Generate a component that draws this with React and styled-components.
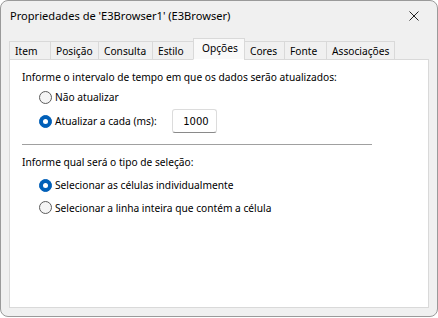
import React from "react";
import styled, { createGlobalStyle } from "styled-components";

const Global = createGlobalStyle`
  html, body {
    margin: 0;
    padding: 0;
    background: #ffffff;
  }
  body {
    font-family: "Noto Sans", "Open Sans", sans-serif;
    font-size: 10.2px;
    color: #000;
  }
`;

const Window = styled.div`
  box-sizing: border-box;
  width: 438px;
  height: 317px;
  border: 1px solid #9a9a9a;
  border-radius: 8px;
  background: #f0f0f0;
  display: flex;
  flex-direction: column;
  overflow: hidden;
`;

const TitleBar = styled.div`
  height: 29px;
  display: flex;
  align-items: center;
  justify-content: space-between;
  padding: 0 0 0 9px;
  font-size: 11.1px;
`;

const CloseButton = styled.div`
  width: 46px;
  height: 29px;
  display: flex;
  align-items: center;
  justify-content: center;
`;

const Body = styled.div`
  flex: 1;
  display: flex;
  flex-direction: column;
  padding: 8px;
`;

const TabStrip = styled.div`
  display: flex;
  align-items: flex-end;
  height: 21px;
  position: relative;
  z-index: 1;
`;

const Tab = styled.div`
  box-sizing: border-box;
  width: ${(p) => p.$w}px;
  height: ${(p) => (p.$active ? 22 : 19)}px;
  padding-left: ${(p) => (p.$active ? 8 : 5)}px;
  padding-bottom: ${(p) => (p.$active ? 3 : 0)}px;
  display: flex;
  align-items: center;
  white-space: nowrap;
  background: ${(p) => (p.$active ? "#f9f9f9" : "#f0f0f0")};
  border: 1px solid #d9d9d9;
  border-bottom-color: ${(p) => (p.$active ? "#ffffff" : "#d9d9d9")};
  margin-left: -1px;
  margin-bottom: -1px;
  &:first-child {
    margin-left: 0;
  }
`;

const Panel = styled.div`
  flex: 1;
  background: #ffffff;
  border: 1px solid #d9d9d9;
  padding: 8px 12px;
  display: flex;
  flex-direction: column;
`;

const Label = styled.div`
  height: 18px;
  display: flex;
  align-items: center;
  margin-bottom: ${(p) => p.$after || 0}px;
`;

const Options = styled.div`
  display: flex;
  flex-direction: column;
  padding-left: 17px;
`;

const OptionRow = styled.div`
  display: flex;
  align-items: center;
  height: ${(p) => p.$h || 22}px;
`;

const Radio = styled.span`
  box-sizing: border-box;
  width: 13px;
  height: 13px;
  border-radius: 50%;
  margin-right: 3px;
  display: flex;
  align-items: center;
  justify-content: center;
  border: 1px solid ${(p) => (p.$checked ? "#005fb8" : "#5c5c5c")};
  background: ${(p) => (p.$checked ? "#005fb8" : "#f5f5f5")};
  &::after {
    content: "";
    display: ${(p) => (p.$checked ? "block" : "none")};
    width: 5px;
    height: 5px;
    border-radius: 50%;
    background: #ffffff;
  }
`;

const NumberBox = styled.div`
  box-sizing: border-box;
  width: 45px;
  height: 24px;
  margin-left: 15px;
  background: #ffffff;
  border: 1px solid #dcdcdc;
  border-bottom-color: #8a8a8a;
  border-radius: 3px;
  display: flex;
  align-items: center;
  justify-content: flex-end;
  padding-right: 7px;
  font-family: "DejaVu Sans", sans-serif;
  font-size: 10px;
`;

const Separator = styled.div`
  width: 350px;
  height: 1px;
  background: #a0a0a0;
  margin: 10px 0 8px;
`;

const tabs = [
  ["Item", 42],
  ["Posição", 49],
  ["Consulta", 55],
  ["Estilo", 42],
  ["Opções", 52],
  ["Cores", 41],
  ["Fonte", 43],
  ["Associações", 69],
];

export default function App() {
  return (
    <>
      <Global />
      <Window>
        <TitleBar>
          <span>Propriedades de 'E3Browser1' (E3Browser)</span>
          <CloseButton>
            <svg width="10" height="10" viewBox="0 0 10 10">
              <path d="M0.5 0.5 L9.5 9.5 M9.5 0.5 L0.5 9.5" stroke="#222" strokeWidth="1" fill="none" />
            </svg>
          </CloseButton>
        </TitleBar>
        <Body>
          <TabStrip>
            {tabs.map(([name, w]) => (
              <Tab key={name} $w={w} $active={name === "Opções"}>
                {name}
              </Tab>
            ))}
          </TabStrip>
          <Panel>
            <Label>Informe o intervalo de tempo em que os dados serão atualizados:</Label>
            <Options>
              <OptionRow $h={22}>
                <Radio />
                Não atualizar
              </OptionRow>
              <OptionRow $h={26}>
                <Radio $checked />
                Atualizar a cada (ms):
                <NumberBox>1000</NumberBox>
              </OptionRow>
            </Options>
            <Separator />
            <Label $after={3}>Informe qual será o tipo de seleção:</Label>
            <Options>
              <OptionRow $h={22}>
                <Radio $checked />
                Selecionar as células individualmente
              </OptionRow>
              <OptionRow $h={23}>
                <Radio />
                Selecionar a linha inteira que contém a célula
              </OptionRow>
            </Options>
          </Panel>
        </Body>
      </Window>
    </>
  );
}
